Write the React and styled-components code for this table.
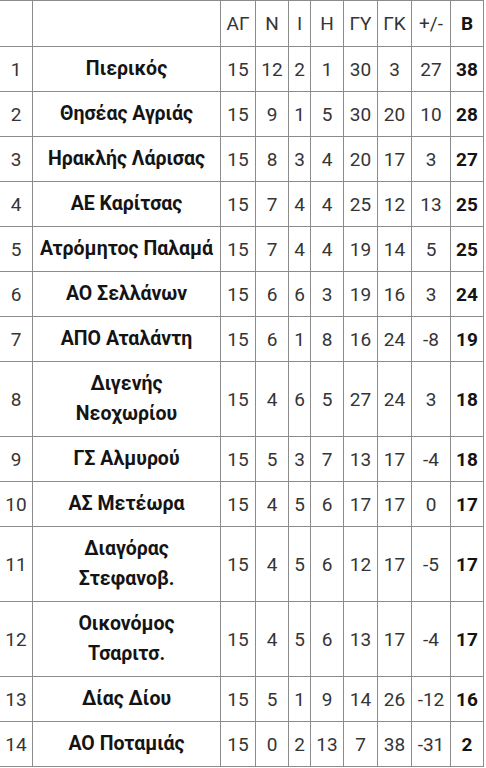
import React from "react";
import styled, { createGlobalStyle } from "styled-components";

const GlobalStyle = createGlobalStyle`
  html, body {
    margin: 0;
    padding: 0;
    background: #ffffff;
  }
  body {
    font-family: Roboto, "Liberation Sans", Arial, sans-serif;
  }
`;

const Table = styled.div`
  display: grid;
  grid-template-columns: 32px 187px 34px 32px 21px 32px 33px 33px 38px 32px;
  gap: 1px;
  width: max-content;
  padding: 1px 1px 1px 0;
  background: #8c8c8c;
`;

const Cell = styled.div`
  display: flex;
  flex-direction: column;
  align-items: center;
  justify-content: center;
  text-align: center;
  background: #ffffff;
  padding: ${(p) => (p.$head ? "8px 0" : "7.5px 0")};
  font-size: 19px;
  line-height: 29px;
  color: ${(p) => (p.$strong ? "#141414" : "#353535")};
  font-weight: ${(p) => (p.$strong ? 700 : 400)};
  white-space: nowrap;
`;

const TeamCell = styled(Cell)`
  padding: 7px 0;
  font-size: 19.5px;
  line-height: 30px;
`;

const headers = ["", "", "ΑΓ", "Ν", "Ι", "Η", "ΓΥ", "ΓΚ", "+/-", "Β"];

const rows = [
  [["Πιερικός"], 15, 12, 2, 1, 30, 3, 27, 38],
  [["Θησέας Αγριάς"], 15, 9, 1, 5, 30, 20, 10, 28],
  [["Ηρακλής Λάρισας"], 15, 8, 3, 4, 20, 17, 3, 27],
  [["ΑΕ Καρίτσας"], 15, 7, 4, 4, 25, 12, 13, 25],
  [["Ατρόμητος Παλαμά"], 15, 7, 4, 4, 19, 14, 5, 25],
  [["ΑΟ Σελλάνων"], 15, 6, 6, 3, 19, 16, 3, 24],
  [["ΑΠΟ Αταλάντη"], 15, 6, 1, 8, 16, 24, -8, 19],
  [["Διγενής", "Νεοχωρίου"], 15, 4, 6, 5, 27, 24, 3, 18],
  [["ΓΣ Αλμυρού"], 15, 5, 3, 7, 13, 17, -4, 18],
  [["ΑΣ Μετέωρα"], 15, 4, 5, 6, 17, 17, 0, 17],
  [["Διαγόρας", "Στεφανοβ."], 15, 4, 5, 6, 12, 17, -5, 17],
  [["Οικονόμος", "Τσαριτσ."], 15, 4, 5, 6, 13, 17, -4, 17],
  [["Δίας Δίου"], 15, 5, 1, 9, 14, 26, -12, 16],
  [["ΑΟ Ποταμιάς"], 15, 0, 2, 13, 7, 38, -31, 2],
];

export default function App() {
  return (
    <>
      <GlobalStyle />
      <Table>
        {headers.map((h, i) => (
          <Cell key={`h${i}`} $head $strong={h === "Β"}>
            {h}
          </Cell>
        ))}
        {rows.map(([team, ...stats], r) => (
          <React.Fragment key={team.join(" ")}>
            <Cell>{r + 1}</Cell>
            <TeamCell $strong>
              {team.map((line) => (
                <span key={line}>{line}</span>
              ))}
            </TeamCell>
            {stats.map((v, i) => (
              <Cell key={i} $strong={i === stats.length - 1}>
                {v}
              </Cell>
            ))}
          </React.Fragment>
        ))}
      </Table>
    </>
  );
}
